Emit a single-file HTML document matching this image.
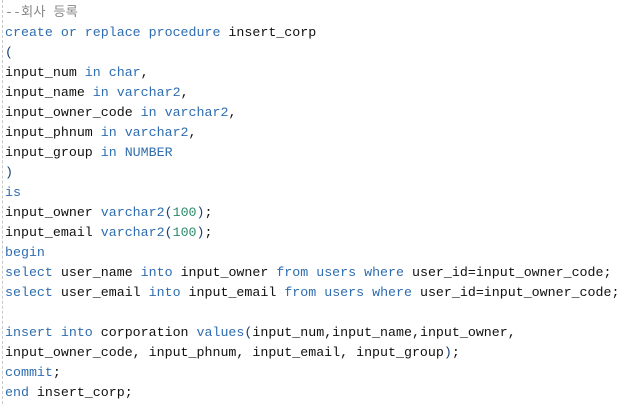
<!DOCTYPE html>
<html><head><meta charset="utf-8"><style>
html,body{margin:0;padding:0;background:#fff;width:624px;height:404px;overflow:hidden}
.c{position:absolute;left:2px;top:0;bottom:0;border-left:1px dashed #c8c8c8;padding-left:2px;padding-top:3px;
font-family:"Liberation Mono","Noto Sans CJK KR",monospace;font-size:13.3px;line-height:20px;color:#111;white-space:pre}
.k{color:#2f6db0}.g{color:#888}.p{color:#1b3f78}.n{color:#2a8a6a}
</style></head><body><div class="c"><span class="g">--회사 등록</span>
<span class="k">create or replace procedure</span> insert_corp
<span class="p">(</span>
input_num <span class="k">in char</span>,
input_name <span class="k">in varchar2</span>,
input_owner_code <span class="k">in varchar2</span>,
input_phnum <span class="k">in varchar2</span>,
input_group <span class="k">in NUMBER</span>
<span class="p">)</span>
<span class="k">is</span>
input_owner <span class="k">varchar2</span><span class="p">(</span><span class="n">100</span><span class="p">)</span>;
input_email <span class="k">varchar2</span><span class="p">(</span><span class="n">100</span><span class="p">)</span>;
<span class="k">begin</span>
<span class="k">select</span> user_name <span class="k">into</span> input_owner <span class="k">from users where</span> user_id=input_owner_code;
<span class="k">select</span> user_email <span class="k">into</span> input_email <span class="k">from users where</span> user_id=input_owner_code;

<span class="k">insert into</span> corporation <span class="k">values</span><span class="p">(</span>input_num,input_name,input_owner,
input_owner_code, input_phnum, input_email, input_group<span class="p">)</span>;
<span class="k">commit</span>;
<span class="k">end</span> insert_corp;</div></body></html>
